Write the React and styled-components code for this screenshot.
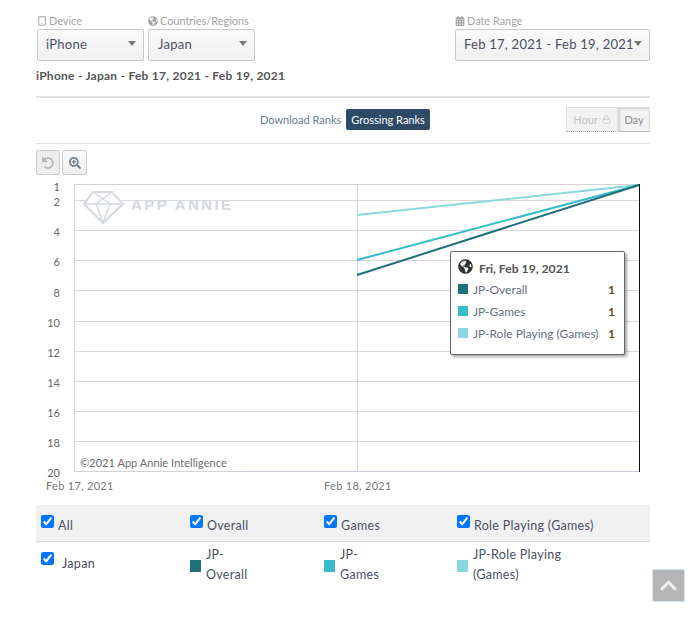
import React from "react";
import styled, { createGlobalStyle } from "styled-components";
import { Lock, Tablet } from "lucide-react";
import {
  FaCalendarAlt,
  FaChevronUp,
  FaGlobeAmericas,
  FaSearchPlus,
  FaUndo,
} from "react-icons/fa";

const GlobalStyle = createGlobalStyle`
  html, body {
    margin: 0;
    background: #fff;
    font-family: "Lato", "Liberation Sans", sans-serif;
    color: #4a4f63;
  }
`;

const Page = styled.div`
  position: relative;
  width: 614px;
  height: 625px;
  padding: 14px 44px 0 36px;
  overflow: hidden;
`;

const Filters = styled.div`
  display: flex;
  justify-content: space-between;
  padding-left: 1px;
`;

const FilterGroup = styled.div`
  display: flex;
  gap: 4px;
`;

const Filter = styled.div`
  display: flex;
  flex-direction: column;
`;

const FilterLabel = styled.div`
  display: flex;
  align-items: center;
  gap: 2px;
  box-sizing: border-box;
  height: 15px;
  padding-bottom: 2px;
  font-size: 10.9px;
  color: #a3a3a3;
  svg {
    font-size: 10px;
  }
`;

const Select = styled.div`
  box-sizing: border-box;
  display: flex;
  align-items: center;
  justify-content: space-between;
  width: ${(p) => p.$width}px;
  height: 32px;
  padding: 0 ${(p) => p.$right}px 3px ${(p) => p.$left}px;
  border: 1px solid #c9c9c9;
  border-radius: 2px;
  background: linear-gradient(#fafafa, #f0f0f0);
  font-size: 13px;
  letter-spacing: 0.25px;
  white-space: nowrap;
  color: #4a4f63;
`;

const Caret = styled.span`
  width: 0;
  height: 0;
  border-left: 4px solid transparent;
  border-right: 4px solid transparent;
  border-top: 5px solid #777;
`;

const Summary = styled.div`
  margin-top: 7px;
  height: 16px;
  line-height: 16px;
  font-size: 12px;
  font-weight: 700;
  letter-spacing: 0.25px;
  color: #555;
`;

const Divider = styled.div`
  margin-top: ${(p) => p.$top}px;
  height: ${(p) => p.$size}px;
  background: #e2e2e2;
`;

const RankBar = styled.div`
  display: flex;
  align-items: center;
  height: 35px;
  padding-top: 7px;
  box-sizing: border-box;
`;

const Ranks = styled.div`
  display: flex;
  align-items: center;
  gap: 5px;
  margin-left: 224px;
`;

const RankTab = styled.div`
  height: 21px;
  line-height: 21px;
  padding: 0 ${(p) => (p.$active ? 5 : 0)}px;
  border-radius: 2px;
  font-size: 11px;
  background: ${(p) => (p.$active ? "#2e4a66" : "transparent")};
  color: ${(p) => (p.$active ? "#fff" : "#6f8091")};
`;

const Granularity = styled.div`
  display: flex;
  margin-left: auto;
  margin-top: 1px;
  height: 25px;
`;

const GranButton = styled.div`
  box-sizing: border-box;
  display: flex;
  align-items: center;
  justify-content: center;
  gap: 4px;
  width: ${(p) => p.$width}px;
  font-size: 11px;
  background: #f2f2f2;
  border: 1px solid #ddd;
  color: ${(p) => (p.$locked ? "#c2c2c2" : "#8b8b8b")};
  border-bottom: 1px ${(p) => (p.$locked ? "dotted #aaa" : "solid #bbb")};
  box-shadow: ${(p) => (p.$locked ? "none" : "inset 1px 1px 2px #ccc")};
`;

const ChartTools = styled.div`
  display: flex;
  gap: 2px;
  margin-top: 6px;
  height: 25px;
`;

const ToolButton = styled.div`
  box-sizing: border-box;
  display: flex;
  align-items: center;
  justify-content: center;
  width: ${(p) => p.$width}px;
  border: 1px solid #ccc;
  border-radius: 2px;
  background: ${(p) => (p.$muted ? "#ededed" : "linear-gradient(#fafafa, #eee)")};
  color: ${(p) => (p.$muted ? "#b5b5b5" : "#6e8190")};
  font-size: 12px;
`;

const ChartArea = styled.div`
  position: relative;
  height: 325px;
  margin-top: 5px;
`;

const ChartSvg = styled.svg`
  display: block;
  font-family: "Lato", "Liberation Sans", sans-serif;
`;

const Tooltip = styled.div`
  position: absolute;
  left: 414px;
  top: 71px;
  box-sizing: border-box;
  width: 175px;
  height: 104px;
  padding: 6px 9px 0 7px;
  background: #fff;
  border: 1px solid #666;
  border-radius: 2px;
  box-shadow: 2px 2px 3px rgba(0, 0, 0, 0.35);
`;

const TooltipTitle = styled.div`
  display: flex;
  align-items: center;
  gap: 6px;
  height: 20px;
  font-size: 12.2px;
  font-weight: 700;
  color: #555;
  svg {
    font-size: 15px;
    margin-top: -3px;
    color: #333;
  }
`;

const TooltipRow = styled.div`
  display: flex;
  align-items: center;
  height: 22px;
  font-size: 12px;
  color: #67707d;
`;

const Swatch = styled.span`
  flex: none;
  width: ${(p) => p.$width}px;
  height: ${(p) => p.$height}px;
  background: ${(p) => p.$color};
`;

const TooltipName = styled.span`
  margin-left: 5px;
  flex: 1;
`;

const TooltipValue = styled.span`
  font-weight: 700;
  color: #6b4a2c;
`;

const Legend = styled.div`
  display: grid;
  grid-template-columns: 154px 134px 133px 193px;
  font-size: 12.5px;
  letter-spacing: 0.3px;
  color: #4a4f63;
`;

const HeaderCell = styled.div`
  display: flex;
  align-items: center;
  gap: 4px;
  height: 36px;
  padding-left: ${(p) => p.$pad || 0}px;
  background: #f1f1f1;
  border-bottom: 1px solid #ddd;
`;

const BodyCell = styled.div`
  display: flex;
  align-items: center;
  gap: 5px;
  height: 48px;
  padding-left: ${(p) => p.$pad || 0}px;
`;

const Check = styled.input.attrs({ type: "checkbox", defaultChecked: true })`
  flex: none;
  width: 13px;
  height: 13px;
  margin: ${(p) => p.$lift || -3}px 0 0;
`;

const CheckText = styled.span`
  margin-top: 4px;
`;

const RegionName = styled.span`
  margin: 0 0 6px 3px;
`;

const SeriesName = styled.span`
  line-height: 20px;
  width: ${(p) => p.$width}px;
  margin-top: -2px;
`;

const ScrollTop = styled.div`
  position: absolute;
  left: 652px;
  top: 569px;
  box-sizing: border-box;
  display: flex;
  align-items: center;
  justify-content: center;
  width: 33px;
  height: 33px;
  border: 1px solid #cfe3ee;
  border-radius: 2px;
  background: #b5b5b5;
  color: #eee;
  font-size: 19px;
`;

const colors = { overall: "#20707a", games: "#36bcca", role: "#8ad7df" };
const gridY = [200, 230, 260, 290, 321, 351, 381, 411, 441];
const ticks = [
  ["1", 187],
  ["2", 202],
  ["4", 232],
  ["6", 262],
  ["8", 293],
  ["10", 323],
  ["12", 353],
  ["14", 383],
  ["16", 413],
  ["18", 443],
  ["20", 473],
];

const Chart = () => (
  <ChartSvg width="614" height="325" viewBox="36 180 614 325">
    <rect x="74.5" y="184.5" width="565" height="287" fill="#fff" stroke="#d3d3d3" />
    {gridY.map((y) => (
      <line key={y} x1="74" x2="640" y1={y + 0.5} y2={y + 0.5} stroke="#d9d9d9" />
    ))}
    <line x1="357.5" x2="357.5" y1="184" y2="471" stroke="#d3d3d3" />
    <line x1="232" x2="640" y1="471.5" y2="471.5" stroke="#c6cedd" />
    <line x1="639.5" x2="639.5" y1="184" y2="472" stroke="#111" />
    <g fill="#fff" stroke="#d5d9df" strokeWidth="2">
      <path d="M93 192H112L123 204L103 223L84 204Z" />
      <path d="M84 204H123M93 192L110 204L103 223L96 204L112 192" fill="none" strokeWidth="1.5" />
    </g>
    <text
      x="131"
      y="210"
      fontFamily="'Liberation Sans', sans-serif"
      fontSize="15"
      fontWeight="700"
      letterSpacing="2.4"
      fill="#d5d9df"
    >
      APP ANNIE
    </text>
    <line x1="357" y1="215" x2="639" y2="185" stroke={colors.role} strokeWidth="2" />
    <line x1="357" y1="260" x2="639" y2="185" stroke={colors.games} strokeWidth="2" />
    <line x1="357" y1="275" x2="639" y2="185" stroke={colors.overall} strokeWidth="2" />
    <text x="80" y="467" fontSize="11" letterSpacing="0.05" fill="#6d6d6d">
      ©2021 App Annie Intelligence
    </text>
    {ticks.map(([label, y]) => (
      <text key={label} x="60" y={y + 4} textAnchor="end" fontSize="11" fill="#666">
        {label}
      </text>
    ))}
    <text x="46" y="490" fontSize="11" letterSpacing="0.3" fill="#777">Feb 17, 2021</text>
    <text x="324" y="490" fontSize="11" letterSpacing="0.3" fill="#777">Feb 18, 2021</text>
  </ChartSvg>
);

const App = () => (
  <Page>
    <GlobalStyle />
    <Filters>
      <FilterGroup>
        <Filter>
          <FilterLabel>
            <Tablet size={10} strokeWidth={2.5} /> Device
          </FilterLabel>
          <Select $width={107} $left={8} $right={7}>
            iPhone <Caret />
          </Select>
        </Filter>
        <Filter>
          <FilterLabel>
            <FaGlobeAmericas /> Countries/Regions
          </FilterLabel>
          <Select $width={107} $left={9} $right={7}>
            Japan <Caret />
          </Select>
        </Filter>
      </FilterGroup>
      <Filter>
        <FilterLabel>
          <FaCalendarAlt /> Date Range
        </FilterLabel>
        <Select $width={195} $left={8} $right={7}>
          Feb 17, 2021 - Feb 19, 2021 <Caret />
        </Select>
      </Filter>
    </Filters>
    <Summary>iPhone - Japan - Feb 17, 2021 - Feb 19, 2021</Summary>
    <Divider $top={12} $size={2} />
    <RankBar>
      <Ranks>
        <RankTab>Download Ranks</RankTab>
        <RankTab $active>Grossing Ranks</RankTab>
      </Ranks>
      <Granularity>
        <GranButton $locked $width={52}>
          Hour <Lock size={9} />
        </GranButton>
        <GranButton $width={32}>Day</GranButton>
      </Granularity>
    </RankBar>
    <Divider $top={10} $size={1} />
    <ChartTools>
      <ToolButton $muted $width={24}>
        <FaUndo />
      </ToolButton>
      <ToolButton $width={25}>
        <FaSearchPlus />
      </ToolButton>
    </ChartTools>
    <ChartArea>
      <Chart />
      <Tooltip>
        <TooltipTitle>
          <FaGlobeAmericas /> Fri, Feb 19, 2021
        </TooltipTitle>
        <TooltipRow>
          <Swatch $width={10} $height={10} $color={colors.overall} />
          <TooltipName>JP-Overall</TooltipName>
          <TooltipValue>1</TooltipValue>
        </TooltipRow>
        <TooltipRow>
          <Swatch $width={10} $height={10} $color={colors.games} />
          <TooltipName>JP-Games</TooltipName>
          <TooltipValue>1</TooltipValue>
        </TooltipRow>
        <TooltipRow>
          <Swatch $width={10} $height={10} $color={colors.role} />
          <TooltipName>JP-Role Playing (Games)</TooltipName>
          <TooltipValue>1</TooltipValue>
        </TooltipRow>
      </Tooltip>
    </ChartArea>
    <Legend>
      <HeaderCell $pad={5}>
        <Check />
        <CheckText>All</CheckText>
      </HeaderCell>
      <HeaderCell>
        <Check />
        <CheckText>Overall</CheckText>
      </HeaderCell>
      <HeaderCell>
        <Check />
        <CheckText>Games</CheckText>
      </HeaderCell>
      <HeaderCell>
        <Check />
        <CheckText>Role Playing (Games)</CheckText>
      </HeaderCell>
      <BodyCell $pad={5}>
        <Check $lift={-15} />
        <RegionName>Japan</RegionName>
      </BodyCell>
      <BodyCell>
        <Swatch $width={11} $height={12} $color={colors.overall} />
        <SeriesName $width={50}>JP-<br />Overall</SeriesName>
      </BodyCell>
      <BodyCell>
        <Swatch $width={11} $height={12} $color={colors.games} />
        <SeriesName $width={50}>JP-<br />Games</SeriesName>
      </BodyCell>
      <BodyCell>
        <Swatch $width={11} $height={12} $color={colors.role} />
        <SeriesName $width={130}>JP-Role Playing (Games)</SeriesName>
      </BodyCell>
    </Legend>
    <ScrollTop>
      <FaChevronUp />
    </ScrollTop>
  </Page>
);

export default App;
